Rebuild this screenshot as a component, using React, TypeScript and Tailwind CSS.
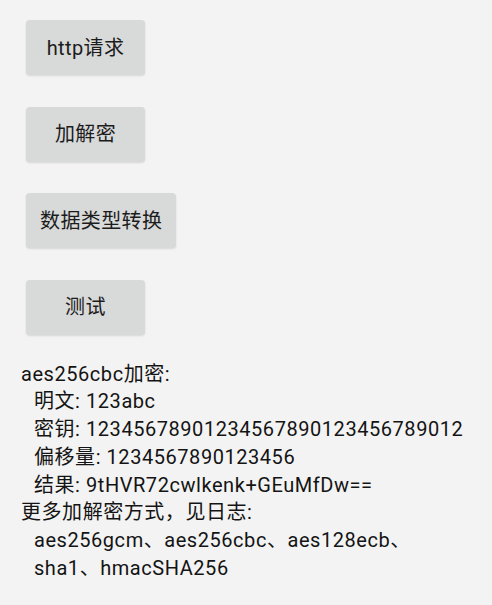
import React from "react";

const font = { fontFamily: 'Roboto, "Noto Sans CJK SC", sans-serif' };

function Btn({ label }: { label: string }) {
  return (
    <button
      className="h-[55px] min-w-[119px] px-[14px] rounded-[4px] bg-[#d8d9d9] text-[#1c1c1c] text-[20px] tracking-[0.4px] shadow-[0_1px_2px_rgba(0,0,0,0.12)] flex items-center justify-center"
      style={font}
    >
      {label}
    </button>
  );
}

export default function App() {
  const lines: [string, boolean][] = [
    ["aes256cbc加密:", false],
    ["明文: 123abc", true],
    ["密钥: 12345678901234567890123456789012", true],
    ["偏移量: 1234567890123456", true],
    ["结果: 9tHVR72cwlkenk+GEuMfDw==", true],
    ["更多加解密方式，见日志:", false],
    ["aes256gcm、aes256cbc、aes128ecb、", true],
    ["sha1、hmacSHA256", true],
  ];
  return (
    <div className="w-[492px] h-[605px] bg-[#f3f3f3] overflow-hidden" style={font}>
      <div className="flex flex-col items-start gap-[31.5px] pl-[26px] pt-[20px]">
        <Btn label="http请求" />
        <Btn label="加解密" />
        <Btn label="数据类型转换" />
        <Btn label="测试" />
      </div>
      <div className="pl-[21px] pt-[26px] text-[20px] leading-[27.8px] tracking-[0.55px] text-[#141414]">
        {lines.map(([t, indent], i) => (
          <div key={i} className={indent ? "pl-[13px]" : ""}>
            {t}
          </div>
        ))}
      </div>
    </div>
  );
}
